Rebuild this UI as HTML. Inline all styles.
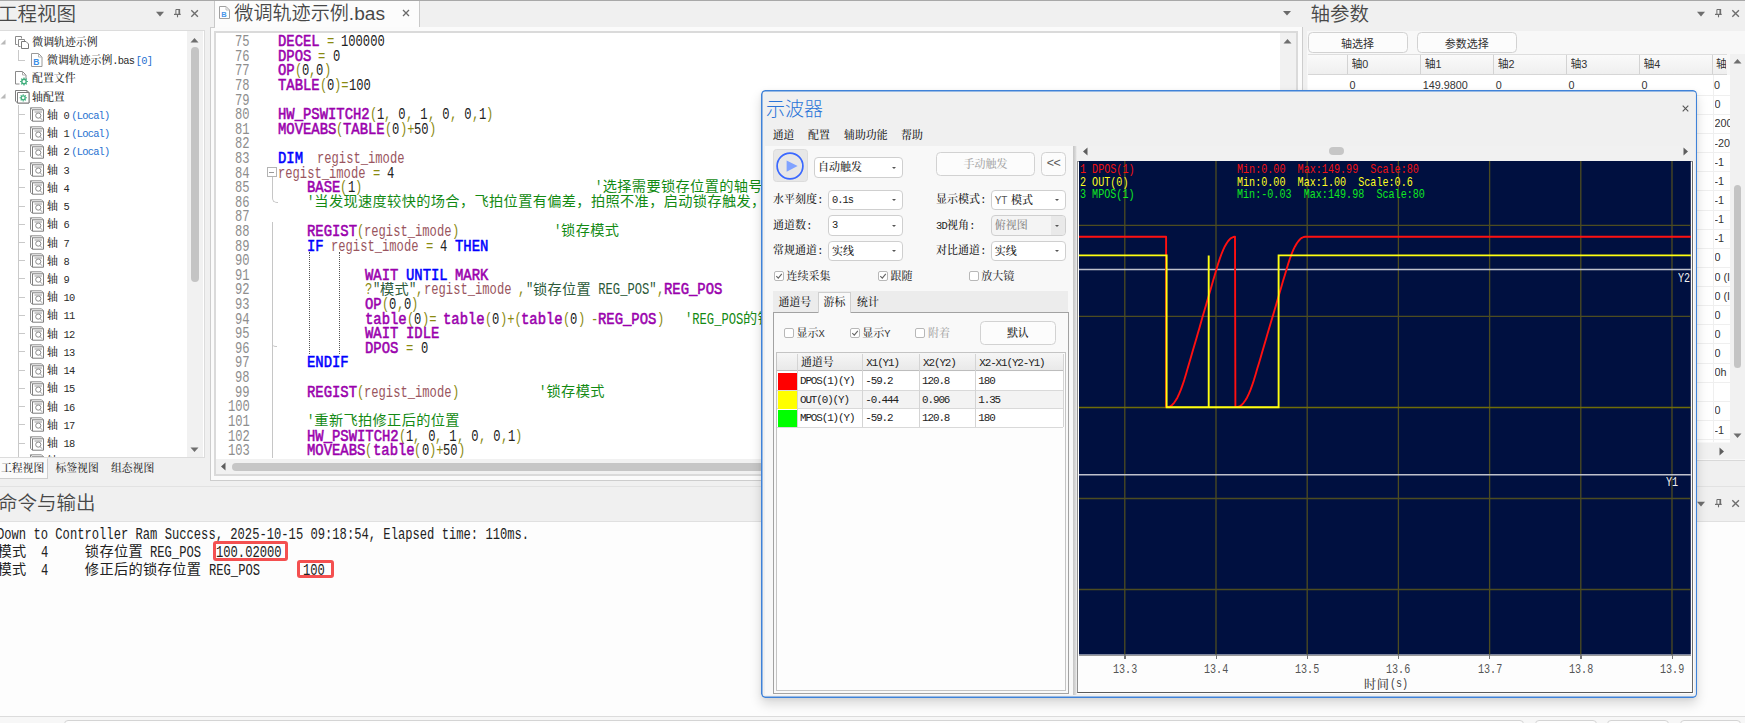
<!DOCTYPE html><html lang="zh"><head><meta charset="utf-8"><title>示波器</title><style>
*{box-sizing:border-box;margin:0;padding:0}
html,body{width:1745px;height:723px;overflow:hidden}
body{position:relative;background:#f0f0f0;font-family:"Liberation Sans","Noto Sans CJK SC",sans-serif;font-size:11px;color:#333}
.a{position:absolute}
.ttl{position:absolute;font-size:19.5px;color:#484848;white-space:nowrap;line-height:24px;font-weight:350}
.song{font-family:"Liberation Mono","Noto Serif CJK SC",serif;font-weight:500}
.ui{font-family:"Liberation Sans","Noto Sans CJK SC",sans-serif}
.tr{position:absolute;left:0;height:18px;line-height:18px;white-space:nowrap;font-size:10.9px;color:#2a2a2a}
.tr b{font-weight:normal;color:#1e6fd0}
.l{font-family:"Liberation Mono",monospace;font-size:10.4px;letter-spacing:-.75px}
.combo .l{position:relative;top:-1.3px;letter-spacing:-1px}
.mono{font-family:"Liberation Mono","Noto Sans CJK SC",monospace}
.ln{position:absolute;left:0;width:249.6px;text-align:right;color:#8e8e8e;height:14.6px;line-height:14.6px;font-size:0}
.ln span{display:inline-block;height:14.6px;line-height:14.6px;text-align:left}
.ln i{display:inline-block;position:relative;top:2px;font-style:normal;transform-origin:0 50%;transform:scaleX(.769);font-family:"Liberation Mono",monospace;font-size:15.8px}
.cl{position:absolute;left:277.9px;height:14.6px;line-height:14.6px;white-space:pre;font-size:0}
.cl span{display:inline-block;height:14.6px;line-height:14.6px;white-space:pre;vertical-align:top;overflow:visible}
.cl i{display:inline-block;position:relative;top:2px;font-style:normal;transform-origin:0 50%;white-space:pre;font-family:"Liberation Mono",monospace;font-size:15.8px}
.cl .r i{transform:scaleX(.769)}
.cl .b i{transform:scaleX(.8787);font-weight:normal;-webkit-text-stroke:.55px currentColor}
.cl .c{font-family:"Noto Sans CJK SC",sans-serif;font-size:14.2px;letter-spacing:.37px;position:relative;top:-.8px}
.kw{color:#9a00ad}.bl{color:#0000ff}.id{color:#9a5560}.op{color:#8a8a10}.nm{color:#222}.cm{color:#138a13}.st{color:#2d5a3a}
.combo{position:absolute;height:20.5px;background:#fff;border:1px solid #cfcfcf;border-radius:4px;font-size:11px;line-height:20.6px;padding-left:2.5px;color:#222;white-space:nowrap;overflow:hidden}
.combo:after{content:"";position:absolute;right:6.5px;top:8.5px;border:2.4px solid transparent;border-top:2.8px solid #555;border-bottom:0}
.lbl{position:absolute;font-size:11px;line-height:14px;color:#222;white-space:nowrap}
.cb{position:absolute;width:10px;height:10px;border:1px solid #b8b8b8;border-radius:2px;background:#fff}
.btn{position:absolute;background:#fcfcfc;border:1px solid #d2d2d2;border-radius:4.5px;text-align:center;white-space:nowrap}
.pt{font-family:"Liberation Mono","Noto Sans CJK SC",monospace;font-size:13.2px;white-space:pre;transform:scaleX(.766);transform-origin:0 50%}
</style></head><body>
<div class="a" style="left:0;top:0;width:1745px;height:1px;background:#a8a8a8"></div>
<div class="ttl" style="left:-2px;top:2px">工程视图</div>
<svg class="a" style="left:149.8px;top:5px" width="56" height="16" viewBox="0 0 56 16"><path d="M6 6.8h8l-4 4.7z" fill="#6e6e6e"/><path d="M25.9 9.2V4.5h3.4" fill="none" stroke="#6e6e6e" stroke-width="1"/><path d="M29.3 4v5.3" stroke="#6e6e6e" stroke-width="1.7"/><path d="M24 9.4h6.7" stroke="#6e6e6e" stroke-width="1.2"/><path d="M27.5 9.6v2.7" stroke="#6e6e6e" stroke-width="1.1"/><path d="M41.3 5.2l6.6 6.6M47.9 5.2l-6.6 6.6" stroke="#6e6e6e" stroke-width="1.35" fill="none"/></svg>
<div class="a" style="left:0;top:30px;width:204.5px;height:428px;background:#fff;border:1px solid #dcdcdc;border-left:0"></div>
<div class="a" style="left:187px;top:31px;width:16px;height:426px;background:#f1f1f1"></div>
<div class="a" style="left:190.5px;top:47px;width:8.4px;height:235px;background:#c4c4c4;border-radius:4px"></div>
<svg class="a" style="left:190px;top:37px" width="9" height="6" viewBox="0 0 9 6"><path d="M0.5 5.5h8L4.5 1z" fill="#6e6e6e"/></svg>
<svg class="a" style="left:190px;top:447px" width="9" height="6" viewBox="0 0 9 6"><path d="M0.5 0.5h8L4.5 5z" fill="#6e6e6e"/></svg>
<div class="a" style="left:0;top:31px;width:187px;height:426px;overflow:hidden">
<div class="tr song" style="top:1.50px;width:187px"><svg class="a" style="left:14px;top:2px" width="16" height="15" viewBox="0 0 16 15"><path d="M1.5 1.5h6v2M1.5 1.5v8h2" fill="none" stroke="#8a8a8a" stroke-width="1"/><path d="M4.5 4.5h6v2h-1M4.5 4.5v7h2" fill="#fff" stroke="#8a8a8a" stroke-width="1"/><path d="M7.5 6.5h4.5l2.5 2.5v4.5h-7z" fill="#fff" stroke="#7a7a7a" stroke-width="1"/></svg><span class="a" style="left:32.3px;top:1.5px">微调轨迹示例</span></div>
<div class="tr song" style="top:19.73px;width:187px"><svg class="a" style="left:30px;top:1px" width="14" height="16" viewBox="0 0 14 16"><path d="M1.5 1.5h7l3.5 3.5v9.5h-10.5z" fill="#fff" stroke="#9a9a9a"/><path d="M8.5 1.5v3.5h3.5" fill="none" stroke="#b5b5b5"/><text x="3.2" y="13" font-family="Liberation Sans,sans-serif" font-size="8.5" font-weight="bold" fill="#3a8ee6">B</text></svg><span class="a" style="left:47px;top:1.5px">微调轨迹示例<span class="l">.bas</span><b class="l" style="margin-left:1.5px">[0]</b></span></div>
<div class="tr song" style="top:37.96px;width:187px"><svg class="a" style="left:14px;top:1px" width="16" height="16" viewBox="0 0 16 16"><path d="M1.5 1.5h7l3.5 3.5v4M1.5 1.5v12.5h4" fill="none" stroke="#8a8a8a"/><path d="M8.5 1.5v3.5h3.5" fill="none" stroke="#aaa"/><circle cx="10" cy="11.5" r="2.2" fill="none" stroke="#3fae7c" stroke-width="1.4"/><path d="M10 7.6v1.4M10 14v1.4M6.1 11.5h1.4M12.5 11.5h1.4M7.2 8.7l1 1M11.8 13.3l1 1M12.8 8.7l-1 1M8.2 13.3l-1 1" stroke="#3fae7c" stroke-width="1.2"/></svg><span class="a" style="left:32px;top:1.5px">配置文件</span></div>
<div class="tr song" style="top:56.19px;width:187px"><svg class="a" style="left:14px;top:2px" width="16" height="15" viewBox="0 0 16 15"><path d="M1.5 1.5h11.5v11M1.5 1.5v10.5l2 2h11.5v-10.5l-2-2" fill="#fff" stroke="#7d7d7d"/><path d="M3.5 3.5h11.5v10.5h-11.5z" fill="#fff" stroke="#7d7d7d"/><circle cx="9.2" cy="8.8" r="2" fill="none" stroke="#3fae7c" stroke-width="1.3"/><path d="M9.2 5.2v1.3M9.2 11.2v1.3M5.6 8.8h1.3M11.6 8.8h1.3M6.7 6.3l.9.9M10.9 10.5l.9.9M11.8 6.3l-.9.9M7.6 10.5l-.9.9" stroke="#3fae7c" stroke-width="1.1"/></svg><span class="a" style="left:32px;top:1.5px">轴配置</span></div>
<div class="tr song" style="top:74.42px;width:187px"><svg class="a" style="left:29px;top:2px" width="16" height="15" viewBox="0 0 16 15"><path d="M1.5 0.8h11l2 2" fill="none" stroke="#8d8d8d"/><path d="M1.5 0.8v11.5l2 2" fill="none" stroke="#8d8d8d"/><path d="M3.5 2.8h11v11.4h-11z" fill="#fff" stroke="#7d7d7d"/><path d="M1.5 0.8l2 2" stroke="#8d8d8d"/><circle cx="9.3" cy="8.6" r="2.6" fill="none" stroke="#8a8a8a" stroke-width="1"/><path d="M5.5 5h7.5M11 10.5l2 2.2" stroke="#9a9a9a" stroke-width="1"/></svg><span class="a" style="left:47px;top:1.5px">轴<span class="l"> 0</span><b class="l" style="margin-left:2.3px">(Local)</b></span></div>
<div class="tr song" style="top:92.65px;width:187px"><svg class="a" style="left:29px;top:2px" width="16" height="15" viewBox="0 0 16 15"><path d="M1.5 0.8h11l2 2" fill="none" stroke="#8d8d8d"/><path d="M1.5 0.8v11.5l2 2" fill="none" stroke="#8d8d8d"/><path d="M3.5 2.8h11v11.4h-11z" fill="#fff" stroke="#7d7d7d"/><path d="M1.5 0.8l2 2" stroke="#8d8d8d"/><circle cx="9.3" cy="8.6" r="2.6" fill="none" stroke="#8a8a8a" stroke-width="1"/><path d="M5.5 5h7.5M11 10.5l2 2.2" stroke="#9a9a9a" stroke-width="1"/></svg><span class="a" style="left:47px;top:1.5px">轴<span class="l"> 1</span><b class="l" style="margin-left:2.3px">(Local)</b></span></div>
<div class="tr song" style="top:110.88px;width:187px"><svg class="a" style="left:29px;top:2px" width="16" height="15" viewBox="0 0 16 15"><path d="M1.5 0.8h11l2 2" fill="none" stroke="#8d8d8d"/><path d="M1.5 0.8v11.5l2 2" fill="none" stroke="#8d8d8d"/><path d="M3.5 2.8h11v11.4h-11z" fill="#fff" stroke="#7d7d7d"/><path d="M1.5 0.8l2 2" stroke="#8d8d8d"/><circle cx="9.3" cy="8.6" r="2.6" fill="none" stroke="#8a8a8a" stroke-width="1"/><path d="M5.5 5h7.5M11 10.5l2 2.2" stroke="#9a9a9a" stroke-width="1"/></svg><span class="a" style="left:47px;top:1.5px">轴<span class="l"> 2</span><b class="l" style="margin-left:2.3px">(Local)</b></span></div>
<div class="tr song" style="top:129.11px;width:187px"><svg class="a" style="left:29px;top:2px" width="16" height="15" viewBox="0 0 16 15"><path d="M1.5 0.8h11l2 2" fill="none" stroke="#8d8d8d"/><path d="M1.5 0.8v11.5l2 2" fill="none" stroke="#8d8d8d"/><path d="M3.5 2.8h11v11.4h-11z" fill="#fff" stroke="#7d7d7d"/><path d="M1.5 0.8l2 2" stroke="#8d8d8d"/><circle cx="9.3" cy="8.6" r="2.6" fill="none" stroke="#8a8a8a" stroke-width="1"/><path d="M5.5 5h7.5M11 10.5l2 2.2" stroke="#9a9a9a" stroke-width="1"/></svg><span class="a" style="left:47px;top:1.5px">轴<span class="l"> 3</span></span></div>
<div class="tr song" style="top:147.34px;width:187px"><svg class="a" style="left:29px;top:2px" width="16" height="15" viewBox="0 0 16 15"><path d="M1.5 0.8h11l2 2" fill="none" stroke="#8d8d8d"/><path d="M1.5 0.8v11.5l2 2" fill="none" stroke="#8d8d8d"/><path d="M3.5 2.8h11v11.4h-11z" fill="#fff" stroke="#7d7d7d"/><path d="M1.5 0.8l2 2" stroke="#8d8d8d"/><circle cx="9.3" cy="8.6" r="2.6" fill="none" stroke="#8a8a8a" stroke-width="1"/><path d="M5.5 5h7.5M11 10.5l2 2.2" stroke="#9a9a9a" stroke-width="1"/></svg><span class="a" style="left:47px;top:1.5px">轴<span class="l"> 4</span></span></div>
<div class="tr song" style="top:165.57px;width:187px"><svg class="a" style="left:29px;top:2px" width="16" height="15" viewBox="0 0 16 15"><path d="M1.5 0.8h11l2 2" fill="none" stroke="#8d8d8d"/><path d="M1.5 0.8v11.5l2 2" fill="none" stroke="#8d8d8d"/><path d="M3.5 2.8h11v11.4h-11z" fill="#fff" stroke="#7d7d7d"/><path d="M1.5 0.8l2 2" stroke="#8d8d8d"/><circle cx="9.3" cy="8.6" r="2.6" fill="none" stroke="#8a8a8a" stroke-width="1"/><path d="M5.5 5h7.5M11 10.5l2 2.2" stroke="#9a9a9a" stroke-width="1"/></svg><span class="a" style="left:47px;top:1.5px">轴<span class="l"> 5</span></span></div>
<div class="tr song" style="top:183.80px;width:187px"><svg class="a" style="left:29px;top:2px" width="16" height="15" viewBox="0 0 16 15"><path d="M1.5 0.8h11l2 2" fill="none" stroke="#8d8d8d"/><path d="M1.5 0.8v11.5l2 2" fill="none" stroke="#8d8d8d"/><path d="M3.5 2.8h11v11.4h-11z" fill="#fff" stroke="#7d7d7d"/><path d="M1.5 0.8l2 2" stroke="#8d8d8d"/><circle cx="9.3" cy="8.6" r="2.6" fill="none" stroke="#8a8a8a" stroke-width="1"/><path d="M5.5 5h7.5M11 10.5l2 2.2" stroke="#9a9a9a" stroke-width="1"/></svg><span class="a" style="left:47px;top:1.5px">轴<span class="l"> 6</span></span></div>
<div class="tr song" style="top:202.03px;width:187px"><svg class="a" style="left:29px;top:2px" width="16" height="15" viewBox="0 0 16 15"><path d="M1.5 0.8h11l2 2" fill="none" stroke="#8d8d8d"/><path d="M1.5 0.8v11.5l2 2" fill="none" stroke="#8d8d8d"/><path d="M3.5 2.8h11v11.4h-11z" fill="#fff" stroke="#7d7d7d"/><path d="M1.5 0.8l2 2" stroke="#8d8d8d"/><circle cx="9.3" cy="8.6" r="2.6" fill="none" stroke="#8a8a8a" stroke-width="1"/><path d="M5.5 5h7.5M11 10.5l2 2.2" stroke="#9a9a9a" stroke-width="1"/></svg><span class="a" style="left:47px;top:1.5px">轴<span class="l"> 7</span></span></div>
<div class="tr song" style="top:220.26px;width:187px"><svg class="a" style="left:29px;top:2px" width="16" height="15" viewBox="0 0 16 15"><path d="M1.5 0.8h11l2 2" fill="none" stroke="#8d8d8d"/><path d="M1.5 0.8v11.5l2 2" fill="none" stroke="#8d8d8d"/><path d="M3.5 2.8h11v11.4h-11z" fill="#fff" stroke="#7d7d7d"/><path d="M1.5 0.8l2 2" stroke="#8d8d8d"/><circle cx="9.3" cy="8.6" r="2.6" fill="none" stroke="#8a8a8a" stroke-width="1"/><path d="M5.5 5h7.5M11 10.5l2 2.2" stroke="#9a9a9a" stroke-width="1"/></svg><span class="a" style="left:47px;top:1.5px">轴<span class="l"> 8</span></span></div>
<div class="tr song" style="top:238.49px;width:187px"><svg class="a" style="left:29px;top:2px" width="16" height="15" viewBox="0 0 16 15"><path d="M1.5 0.8h11l2 2" fill="none" stroke="#8d8d8d"/><path d="M1.5 0.8v11.5l2 2" fill="none" stroke="#8d8d8d"/><path d="M3.5 2.8h11v11.4h-11z" fill="#fff" stroke="#7d7d7d"/><path d="M1.5 0.8l2 2" stroke="#8d8d8d"/><circle cx="9.3" cy="8.6" r="2.6" fill="none" stroke="#8a8a8a" stroke-width="1"/><path d="M5.5 5h7.5M11 10.5l2 2.2" stroke="#9a9a9a" stroke-width="1"/></svg><span class="a" style="left:47px;top:1.5px">轴<span class="l"> 9</span></span></div>
<div class="tr song" style="top:256.72px;width:187px"><svg class="a" style="left:29px;top:2px" width="16" height="15" viewBox="0 0 16 15"><path d="M1.5 0.8h11l2 2" fill="none" stroke="#8d8d8d"/><path d="M1.5 0.8v11.5l2 2" fill="none" stroke="#8d8d8d"/><path d="M3.5 2.8h11v11.4h-11z" fill="#fff" stroke="#7d7d7d"/><path d="M1.5 0.8l2 2" stroke="#8d8d8d"/><circle cx="9.3" cy="8.6" r="2.6" fill="none" stroke="#8a8a8a" stroke-width="1"/><path d="M5.5 5h7.5M11 10.5l2 2.2" stroke="#9a9a9a" stroke-width="1"/></svg><span class="a" style="left:47px;top:1.5px">轴<span class="l"> 10</span></span></div>
<div class="tr song" style="top:274.95px;width:187px"><svg class="a" style="left:29px;top:2px" width="16" height="15" viewBox="0 0 16 15"><path d="M1.5 0.8h11l2 2" fill="none" stroke="#8d8d8d"/><path d="M1.5 0.8v11.5l2 2" fill="none" stroke="#8d8d8d"/><path d="M3.5 2.8h11v11.4h-11z" fill="#fff" stroke="#7d7d7d"/><path d="M1.5 0.8l2 2" stroke="#8d8d8d"/><circle cx="9.3" cy="8.6" r="2.6" fill="none" stroke="#8a8a8a" stroke-width="1"/><path d="M5.5 5h7.5M11 10.5l2 2.2" stroke="#9a9a9a" stroke-width="1"/></svg><span class="a" style="left:47px;top:1.5px">轴<span class="l"> 11</span></span></div>
<div class="tr song" style="top:293.18px;width:187px"><svg class="a" style="left:29px;top:2px" width="16" height="15" viewBox="0 0 16 15"><path d="M1.5 0.8h11l2 2" fill="none" stroke="#8d8d8d"/><path d="M1.5 0.8v11.5l2 2" fill="none" stroke="#8d8d8d"/><path d="M3.5 2.8h11v11.4h-11z" fill="#fff" stroke="#7d7d7d"/><path d="M1.5 0.8l2 2" stroke="#8d8d8d"/><circle cx="9.3" cy="8.6" r="2.6" fill="none" stroke="#8a8a8a" stroke-width="1"/><path d="M5.5 5h7.5M11 10.5l2 2.2" stroke="#9a9a9a" stroke-width="1"/></svg><span class="a" style="left:47px;top:1.5px">轴<span class="l"> 12</span></span></div>
<div class="tr song" style="top:311.41px;width:187px"><svg class="a" style="left:29px;top:2px" width="16" height="15" viewBox="0 0 16 15"><path d="M1.5 0.8h11l2 2" fill="none" stroke="#8d8d8d"/><path d="M1.5 0.8v11.5l2 2" fill="none" stroke="#8d8d8d"/><path d="M3.5 2.8h11v11.4h-11z" fill="#fff" stroke="#7d7d7d"/><path d="M1.5 0.8l2 2" stroke="#8d8d8d"/><circle cx="9.3" cy="8.6" r="2.6" fill="none" stroke="#8a8a8a" stroke-width="1"/><path d="M5.5 5h7.5M11 10.5l2 2.2" stroke="#9a9a9a" stroke-width="1"/></svg><span class="a" style="left:47px;top:1.5px">轴<span class="l"> 13</span></span></div>
<div class="tr song" style="top:329.64px;width:187px"><svg class="a" style="left:29px;top:2px" width="16" height="15" viewBox="0 0 16 15"><path d="M1.5 0.8h11l2 2" fill="none" stroke="#8d8d8d"/><path d="M1.5 0.8v11.5l2 2" fill="none" stroke="#8d8d8d"/><path d="M3.5 2.8h11v11.4h-11z" fill="#fff" stroke="#7d7d7d"/><path d="M1.5 0.8l2 2" stroke="#8d8d8d"/><circle cx="9.3" cy="8.6" r="2.6" fill="none" stroke="#8a8a8a" stroke-width="1"/><path d="M5.5 5h7.5M11 10.5l2 2.2" stroke="#9a9a9a" stroke-width="1"/></svg><span class="a" style="left:47px;top:1.5px">轴<span class="l"> 14</span></span></div>
<div class="tr song" style="top:347.87px;width:187px"><svg class="a" style="left:29px;top:2px" width="16" height="15" viewBox="0 0 16 15"><path d="M1.5 0.8h11l2 2" fill="none" stroke="#8d8d8d"/><path d="M1.5 0.8v11.5l2 2" fill="none" stroke="#8d8d8d"/><path d="M3.5 2.8h11v11.4h-11z" fill="#fff" stroke="#7d7d7d"/><path d="M1.5 0.8l2 2" stroke="#8d8d8d"/><circle cx="9.3" cy="8.6" r="2.6" fill="none" stroke="#8a8a8a" stroke-width="1"/><path d="M5.5 5h7.5M11 10.5l2 2.2" stroke="#9a9a9a" stroke-width="1"/></svg><span class="a" style="left:47px;top:1.5px">轴<span class="l"> 15</span></span></div>
<div class="tr song" style="top:366.10px;width:187px"><svg class="a" style="left:29px;top:2px" width="16" height="15" viewBox="0 0 16 15"><path d="M1.5 0.8h11l2 2" fill="none" stroke="#8d8d8d"/><path d="M1.5 0.8v11.5l2 2" fill="none" stroke="#8d8d8d"/><path d="M3.5 2.8h11v11.4h-11z" fill="#fff" stroke="#7d7d7d"/><path d="M1.5 0.8l2 2" stroke="#8d8d8d"/><circle cx="9.3" cy="8.6" r="2.6" fill="none" stroke="#8a8a8a" stroke-width="1"/><path d="M5.5 5h7.5M11 10.5l2 2.2" stroke="#9a9a9a" stroke-width="1"/></svg><span class="a" style="left:47px;top:1.5px">轴<span class="l"> 16</span></span></div>
<div class="tr song" style="top:384.33px;width:187px"><svg class="a" style="left:29px;top:2px" width="16" height="15" viewBox="0 0 16 15"><path d="M1.5 0.8h11l2 2" fill="none" stroke="#8d8d8d"/><path d="M1.5 0.8v11.5l2 2" fill="none" stroke="#8d8d8d"/><path d="M3.5 2.8h11v11.4h-11z" fill="#fff" stroke="#7d7d7d"/><path d="M1.5 0.8l2 2" stroke="#8d8d8d"/><circle cx="9.3" cy="8.6" r="2.6" fill="none" stroke="#8a8a8a" stroke-width="1"/><path d="M5.5 5h7.5M11 10.5l2 2.2" stroke="#9a9a9a" stroke-width="1"/></svg><span class="a" style="left:47px;top:1.5px">轴<span class="l"> 17</span></span></div>
<div class="tr song" style="top:402.56px;width:187px"><svg class="a" style="left:29px;top:2px" width="16" height="15" viewBox="0 0 16 15"><path d="M1.5 0.8h11l2 2" fill="none" stroke="#8d8d8d"/><path d="M1.5 0.8v11.5l2 2" fill="none" stroke="#8d8d8d"/><path d="M3.5 2.8h11v11.4h-11z" fill="#fff" stroke="#7d7d7d"/><path d="M1.5 0.8l2 2" stroke="#8d8d8d"/><circle cx="9.3" cy="8.6" r="2.6" fill="none" stroke="#8a8a8a" stroke-width="1"/><path d="M5.5 5h7.5M11 10.5l2 2.2" stroke="#9a9a9a" stroke-width="1"/></svg><span class="a" style="left:47px;top:1.5px">轴<span class="l"> 18</span></span></div>
<div class="tr song" style="top:420.79px;width:187px"><svg class="a" style="left:29px;top:2px" width="16" height="15" viewBox="0 0 16 15"><path d="M1.5 0.8h11l2 2" fill="none" stroke="#8d8d8d"/><path d="M1.5 0.8v11.5l2 2" fill="none" stroke="#8d8d8d"/><path d="M3.5 2.8h11v11.4h-11z" fill="#fff" stroke="#7d7d7d"/><path d="M1.5 0.8l2 2" stroke="#8d8d8d"/><circle cx="9.3" cy="8.6" r="2.6" fill="none" stroke="#8a8a8a" stroke-width="1"/><path d="M5.5 5h7.5M11 10.5l2 2.2" stroke="#9a9a9a" stroke-width="1"/></svg><span class="a" style="left:47px;top:1.5px">轴<span class="l"> 19</span></span></div>
<svg class="a" style="left:0;top:7.50px" width="6" height="6" viewBox="0 0 6 6"><path d="M5.5 0.5v5h-5z" fill="#b9b9b9"/></svg>
<svg class="a" style="left:0;top:62.19px" width="6" height="6" viewBox="0 0 6 6"><path d="M5.5 0.5v5h-5z" fill="#b9b9b9"/></svg>
<div class="a" style="left:18px;top:18.73px;width:1px;height:10.00px;background:#c9c9c9"></div>
<div class="a" style="left:18px;top:28.73px;width:7px;height:1px;background:#c9c9c9"></div>
<div class="a" style="left:18px;top:74.19px;width:1px;height:374.81px;background:#c9c9c9"></div>
<div class="a" style="left:18px;top:83.42px;width:7px;height:1px;background:#c9c9c9"></div>
<div class="a" style="left:18px;top:101.65px;width:7px;height:1px;background:#c9c9c9"></div>
<div class="a" style="left:18px;top:119.88px;width:7px;height:1px;background:#c9c9c9"></div>
<div class="a" style="left:18px;top:138.11px;width:7px;height:1px;background:#c9c9c9"></div>
<div class="a" style="left:18px;top:156.34px;width:7px;height:1px;background:#c9c9c9"></div>
<div class="a" style="left:18px;top:174.57px;width:7px;height:1px;background:#c9c9c9"></div>
<div class="a" style="left:18px;top:192.80px;width:7px;height:1px;background:#c9c9c9"></div>
<div class="a" style="left:18px;top:211.03px;width:7px;height:1px;background:#c9c9c9"></div>
<div class="a" style="left:18px;top:229.26px;width:7px;height:1px;background:#c9c9c9"></div>
<div class="a" style="left:18px;top:247.49px;width:7px;height:1px;background:#c9c9c9"></div>
<div class="a" style="left:18px;top:265.72px;width:7px;height:1px;background:#c9c9c9"></div>
<div class="a" style="left:18px;top:283.95px;width:7px;height:1px;background:#c9c9c9"></div>
<div class="a" style="left:18px;top:302.18px;width:7px;height:1px;background:#c9c9c9"></div>
<div class="a" style="left:18px;top:320.41px;width:7px;height:1px;background:#c9c9c9"></div>
<div class="a" style="left:18px;top:338.64px;width:7px;height:1px;background:#c9c9c9"></div>
<div class="a" style="left:18px;top:356.87px;width:7px;height:1px;background:#c9c9c9"></div>
<div class="a" style="left:18px;top:375.10px;width:7px;height:1px;background:#c9c9c9"></div>
<div class="a" style="left:18px;top:393.33px;width:7px;height:1px;background:#c9c9c9"></div>
<div class="a" style="left:18px;top:411.56px;width:7px;height:1px;background:#c9c9c9"></div>
<div class="a" style="left:18px;top:429.79px;width:7px;height:1px;background:#c9c9c9"></div>
</div>
<div class="a" style="left:0;top:458px;width:48px;height:20.5px;background:#fbfbfb;border:1px solid #cfcfcf;border-left:0;border-top-color:#fbfbfb"></div>
<div class="lbl song" style="left:1px;top:462.3px;font-size:10.8px;color:#333">工程视图</div>
<div class="lbl song" style="left:55.5px;top:462.3px;font-size:10.8px;color:#333">标签视图</div>
<div class="lbl song" style="left:111px;top:462.3px;font-size:10.8px;color:#333">组态视图</div>
<div class="a" style="left:214.4px;top:1px;width:205.6px;height:27px;background:#fcfcfc;border-left:1px solid #c9c9c9;border-right:1px solid #c9c9c9"></div>
<div class="a" style="left:419px;top:27px;width:884px;height:1px;background:#c9c9c9"></div>
<svg class="a" style="left:218px;top:5px" width="13" height="15" viewBox="0 0 13 15"><path d="M1.5 1.5h6.5l3.5 3.5v8.5h-10z" fill="#fff" stroke="#a0a0a0"/><path d="M8 1.5v3.5h3.5" fill="none" stroke="#c0c0c0"/><text x="3.2" y="12" font-family="Liberation Sans,sans-serif" font-size="7.5" font-weight="bold" fill="#4a97ea">B</text></svg>
<div class="ttl" style="left:234.3px;top:1.5px;font-size:19.1px">微调轨迹示例.bas</div>
<svg class="a" style="left:401.6px;top:9px" width="8" height="8" viewBox="0 0 8 8"><path d="M1 1l6 6M7 1l-6 6" stroke="#6a6a6a" stroke-width="1.3" fill="none"/></svg>
<svg class="a" style="left:1282px;top:9px" width="10" height="8" viewBox="0 0 10 8"><path d="M1 2h8L5 6.5z" fill="#6a6a6a"/></svg>
<div class="a" style="left:209.5px;top:27px;width:1093px;height:454px;background:#fbfbfb;border:1px solid #cdcdcd;border-top:0"></div>
<div class="a" style="left:209.5px;top:27px;width:5px;height:1px;background:#cdcdcd"></div>
<div class="a" style="left:213.5px;top:31px;width:1084px;height:445px;background:#fff;border:2px solid #dadada"></div>
<div class="a" style="left:1280px;top:33px;width:16px;height:441px;background:#f1f1f1"></div>
<svg class="a" style="left:1283px;top:38px" width="9" height="6" viewBox="0 0 9 6"><path d="M0.5 5.5h8L4.5 1z" fill="#6e6e6e"/></svg>
<div class="a" style="left:215.5px;top:458.5px;width:1065px;height:15.5px;background:#f1f1f1"></div>
<svg class="a" style="left:220px;top:462px" width="6" height="9" viewBox="0 0 6 9"><path d="M5.5 0.5v8L1 4.5z" fill="#5e5e5e"/></svg>
<div class="a" style="left:231.5px;top:462.5px;width:700px;height:8px;background:#c6c6c6;border-radius:4px"></div>
<div class="a" style="left:0;top:0;width:1280px;height:458px;overflow:hidden">
<div class="ln" style="top:33.20px"><span style="width:14.58px"><i>75</i></span></div>
<div class="cl" style="top:33.20px"><span class="b kw" style="width:41.65px"><i>DECEL</i></span><span class="r" style="width:7.29px"> </span><span class="r op" style="width:7.29px"><i>=</i></span><span class="r" style="width:7.29px"> </span><span class="r nm" style="width:43.74px"><i>100000</i></span></div>
<div class="ln" style="top:47.80px"><span style="width:14.58px"><i>76</i></span></div>
<div class="cl" style="top:47.80px"><span class="b kw" style="width:33.32px"><i>DPOS</i></span><span class="r" style="width:7.29px"> </span><span class="r op" style="width:7.29px"><i>=</i></span><span class="r" style="width:7.29px"> </span><span class="r nm" style="width:7.29px"><i>0</i></span></div>
<div class="ln" style="top:62.41px"><span style="width:14.58px"><i>77</i></span></div>
<div class="cl" style="top:62.41px"><span class="b kw" style="width:16.66px"><i>OP</i></span><span class="r op" style="width:7.29px"><i>(</i></span><span class="r nm" style="width:7.29px"><i>0</i></span><span class="r op" style="width:7.29px"><i>,</i></span><span class="r nm" style="width:7.29px"><i>0</i></span><span class="r op" style="width:7.29px"><i>)</i></span></div>
<div class="ln" style="top:77.01px"><span style="width:14.58px"><i>78</i></span></div>
<div class="cl" style="top:77.01px"><span class="b kw" style="width:41.65px"><i>TABLE</i></span><span class="r op" style="width:7.29px"><i>(</i></span><span class="r nm" style="width:7.29px"><i>0</i></span><span class="r op" style="width:14.58px"><i>)=</i></span><span class="r nm" style="width:21.87px"><i>100</i></span></div>
<div class="ln" style="top:91.61px"><span style="width:14.58px"><i>79</i></span></div>
<div class="ln" style="top:106.22px"><span style="width:14.58px"><i>80</i></span></div>
<div class="cl" style="top:106.22px"><span class="b kw" style="width:91.63px"><i>HW_PSWITCH2</i></span><span class="r op" style="width:7.29px"><i>(</i></span><span class="r nm" style="width:7.29px"><i>1</i></span><span class="r op" style="width:7.29px"><i>,</i></span><span class="r nm" style="width:14.58px"><i> 0</i></span><span class="r op" style="width:7.29px"><i>,</i></span><span class="r nm" style="width:14.58px"><i> 1</i></span><span class="r op" style="width:7.29px"><i>,</i></span><span class="r nm" style="width:14.58px"><i> 0</i></span><span class="r op" style="width:7.29px"><i>,</i></span><span class="r nm" style="width:14.58px"><i> 0</i></span><span class="r op" style="width:7.29px"><i>,</i></span><span class="r nm" style="width:7.29px"><i>1</i></span><span class="r op" style="width:7.29px"><i>)</i></span></div>
<div class="ln" style="top:120.82px"><span style="width:14.58px"><i>81</i></span></div>
<div class="cl" style="top:120.82px"><span class="b kw" style="width:58.31px"><i>MOVEABS</i></span><span class="r op" style="width:7.29px"><i>(</i></span><span class="b kw" style="width:41.65px"><i>TABLE</i></span><span class="r op" style="width:7.29px"><i>(</i></span><span class="r nm" style="width:7.29px"><i>0</i></span><span class="r op" style="width:14.58px"><i>)+</i></span><span class="r nm" style="width:14.58px"><i>50</i></span><span class="r op" style="width:7.29px"><i>)</i></span></div>
<div class="ln" style="top:135.43px"><span style="width:14.58px"><i>82</i></span></div>
<div class="ln" style="top:150.03px"><span style="width:14.58px"><i>83</i></span></div>
<div class="cl" style="top:150.03px"><span class="b bl" style="width:24.99px"><i>DIM</i></span><span class="r" style="width:14.58px"> </span><span class="r id" style="width:87.48px"><i>regist_imode</i></span></div>
<div class="ln" style="top:164.63px"><span style="width:14.58px"><i>84</i></span></div>
<div class="cl" style="top:164.63px"><span class="r id" style="width:87.48px"><i>regist_imode</i></span><span class="r" style="width:7.29px"> </span><span class="r op" style="width:7.29px"><i>=</i></span><span class="r" style="width:7.29px"> </span><span class="r nm" style="width:7.29px"><i>4</i></span></div>
<div class="ln" style="top:179.24px"><span style="width:14.58px"><i>85</i></span></div>
<div class="cl" style="top:179.24px"><span class="r" style="width:29.16px"> </span><span class="b kw" style="width:33.32px"><i>BASE</i></span><span class="r op" style="width:7.29px"><i>(</i></span><span class="r nm" style="width:7.29px"><i>1</i></span><span class="r op" style="width:7.29px"><i>)</i></span><span class="r" style="width:233.28px"> </span><span class="r cm" style="width:7.29px"><i>'</i></span><span class="c cm" style="width:160.27px">选择需要锁存位置的轴号</span></div>
<div class="ln" style="top:193.84px"><span style="width:14.58px"><i>86</i></span></div>
<div class="cl" style="top:193.84px"><span class="r" style="width:29.16px"> </span><span class="r cm" style="width:7.29px"><i>'</i></span><span class="c cm" style="width:451.67px">当发现速度较快的场合，飞拍位置有偏差，拍照不准，启动锁存触发，</span></div>
<div class="ln" style="top:208.45px"><span style="width:14.58px"><i>87</i></span></div>
<div class="ln" style="top:223.05px"><span style="width:14.58px"><i>88</i></span></div>
<div class="cl" style="top:223.05px"><span class="r" style="width:29.16px"> </span><span class="b kw" style="width:49.98px"><i>REGIST</i></span><span class="r op" style="width:7.29px"><i>(</i></span><span class="r id" style="width:87.48px"><i>regist_imode</i></span><span class="r op" style="width:7.29px"><i>)</i></span><span class="r" style="width:94.77px"> </span><span class="r cm" style="width:7.29px"><i>'</i></span><span class="c cm" style="width:58.28px">锁存模式</span></div>
<div class="ln" style="top:237.65px"><span style="width:14.58px"><i>89</i></span></div>
<div class="cl" style="top:237.65px"><span class="r" style="width:29.16px"> </span><span class="b bl" style="width:16.66px"><i>IF</i></span><span class="r" style="width:7.29px"> </span><span class="r id" style="width:87.48px"><i>regist_imode</i></span><span class="r" style="width:7.29px"> </span><span class="r op" style="width:7.29px"><i>=</i></span><span class="r" style="width:7.29px"> </span><span class="r nm" style="width:7.29px"><i>4</i></span><span class="r" style="width:7.29px"> </span><span class="b bl" style="width:33.32px"><i>THEN</i></span></div>
<div class="ln" style="top:252.26px"><span style="width:14.58px"><i>90</i></span></div>
<div class="ln" style="top:266.86px"><span style="width:14.58px"><i>91</i></span></div>
<div class="cl" style="top:266.86px"><span class="r" style="width:87.48px"> </span><span class="b kw" style="width:33.32px"><i>WAIT</i></span><span class="r" style="width:7.29px"> </span><span class="b bl" style="width:41.65px"><i>UNTIL</i></span><span class="r" style="width:7.29px"> </span><span class="b kw" style="width:33.32px"><i>MARK</i></span></div>
<div class="ln" style="top:281.47px"><span style="width:14.58px"><i>92</i></span></div>
<div class="cl" style="top:281.47px"><span class="r" style="width:87.48px"> </span><span class="r op" style="width:7.29px"><i>?</i></span><span class="r st" style="width:7.29px"><i>"</i></span><span class="c st" style="width:29.14px">模式</span><span class="r st" style="width:7.29px"><i>"</i></span><span class="r op" style="width:7.29px"><i>,</i></span><span class="r id" style="width:87.48px"><i>regist_imode</i></span><span class="r" style="width:7.29px"> </span><span class="r op" style="width:7.29px"><i>,</i></span><span class="r st" style="width:7.29px"><i>"</i></span><span class="c st" style="width:58.28px">锁存位置</span><span class="r st" style="width:65.61px"><i> REG_POS"</i></span><span class="r op" style="width:7.29px"><i>,</i></span><span class="b kw" style="width:58.31px"><i>REG_POS</i></span></div>
<div class="ln" style="top:296.07px"><span style="width:14.58px"><i>93</i></span></div>
<div class="cl" style="top:296.07px"><span class="r" style="width:87.48px"> </span><span class="b kw" style="width:16.66px"><i>OP</i></span><span class="r op" style="width:7.29px"><i>(</i></span><span class="r nm" style="width:7.29px"><i>0</i></span><span class="r op" style="width:7.29px"><i>,</i></span><span class="r nm" style="width:7.29px"><i>0</i></span><span class="r op" style="width:7.29px"><i>)</i></span></div>
<div class="ln" style="top:310.67px"><span style="width:14.58px"><i>94</i></span></div>
<div class="cl" style="top:310.67px"><span class="r" style="width:87.48px"> </span><span class="b kw" style="width:41.65px"><i>table</i></span><span class="r op" style="width:7.29px"><i>(</i></span><span class="r nm" style="width:7.29px"><i>0</i></span><span class="r op" style="width:14.58px"><i>)=</i></span><span class="r" style="width:7.29px"> </span><span class="b kw" style="width:41.65px"><i>table</i></span><span class="r op" style="width:7.29px"><i>(</i></span><span class="r nm" style="width:7.29px"><i>0</i></span><span class="r op" style="width:21.87px"><i>)+(</i></span><span class="b kw" style="width:41.65px"><i>table</i></span><span class="r op" style="width:7.29px"><i>(</i></span><span class="r nm" style="width:7.29px"><i>0</i></span><span class="r op" style="width:7.29px"><i>)</i></span><span class="r" style="width:6.00px"> </span><span class="r op" style="width:7.29px"><i>-</i></span><span class="b kw" style="width:58.31px"><i>REG_POS</i></span><span class="r op" style="width:7.29px"><i>)</i></span><span class="r" style="width:20.90px"> </span><span class="r cm" style="width:58.32px"><i>'REG_POS</i></span><span class="c cm" style="width:72.85px">的锁存位置</span></div>
<div class="ln" style="top:325.28px"><span style="width:14.58px"><i>95</i></span></div>
<div class="cl" style="top:325.28px"><span class="r" style="width:87.48px"> </span><span class="b kw" style="width:33.32px"><i>WAIT</i></span><span class="r" style="width:7.29px"> </span><span class="b kw" style="width:33.32px"><i>IDLE</i></span></div>
<div class="ln" style="top:339.88px"><span style="width:14.58px"><i>96</i></span></div>
<div class="cl" style="top:339.88px"><span class="r" style="width:87.48px"> </span><span class="b kw" style="width:33.32px"><i>DPOS</i></span><span class="r" style="width:7.29px"> </span><span class="r op" style="width:7.29px"><i>=</i></span><span class="r" style="width:7.29px"> </span><span class="r nm" style="width:7.29px"><i>0</i></span></div>
<div class="ln" style="top:354.49px"><span style="width:14.58px"><i>97</i></span></div>
<div class="cl" style="top:354.49px"><span class="r" style="width:29.16px"> </span><span class="b bl" style="width:41.65px"><i>ENDIF</i></span></div>
<div class="ln" style="top:369.09px"><span style="width:14.58px"><i>98</i></span></div>
<div class="ln" style="top:383.69px"><span style="width:14.58px"><i>99</i></span></div>
<div class="cl" style="top:383.69px"><span class="r" style="width:29.16px"> </span><span class="b kw" style="width:49.98px"><i>REGIST</i></span><span class="r op" style="width:7.29px"><i>(</i></span><span class="r id" style="width:87.48px"><i>regist_imode</i></span><span class="r op" style="width:7.29px"><i>)</i></span><span class="r" style="width:80.19px"> </span><span class="r cm" style="width:7.29px"><i>'</i></span><span class="c cm" style="width:58.28px">锁存模式</span></div>
<div class="ln" style="top:398.30px"><span style="width:21.87px"><i>100</i></span></div>
<div class="ln" style="top:412.90px"><span style="width:21.87px"><i>101</i></span></div>
<div class="cl" style="top:412.90px"><span class="r" style="width:29.16px"> </span><span class="r cm" style="width:7.29px"><i>'</i></span><span class="c cm" style="width:145.70px">重新飞拍修正后的位置</span></div>
<div class="ln" style="top:427.51px"><span style="width:21.87px"><i>102</i></span></div>
<div class="cl" style="top:427.51px"><span class="r" style="width:29.16px"> </span><span class="b kw" style="width:91.63px"><i>HW_PSWITCH2</i></span><span class="r op" style="width:7.29px"><i>(</i></span><span class="r nm" style="width:7.29px"><i>1</i></span><span class="r op" style="width:7.29px"><i>,</i></span><span class="r nm" style="width:14.58px"><i> 0</i></span><span class="r op" style="width:7.29px"><i>,</i></span><span class="r nm" style="width:14.58px"><i> 1</i></span><span class="r op" style="width:7.29px"><i>,</i></span><span class="r nm" style="width:14.58px"><i> 0</i></span><span class="r op" style="width:7.29px"><i>,</i></span><span class="r nm" style="width:14.58px"><i> 0</i></span><span class="r op" style="width:7.29px"><i>,</i></span><span class="r nm" style="width:7.29px"><i>1</i></span><span class="r op" style="width:7.29px"><i>)</i></span></div>
<div class="ln" style="top:442.11px"><span style="width:21.87px"><i>103</i></span></div>
<div class="cl" style="top:442.11px"><span class="r" style="width:29.16px"> </span><span class="b kw" style="width:58.31px"><i>MOVEABS</i></span><span class="r op" style="width:7.29px"><i>(</i></span><span class="b kw" style="width:41.65px"><i>table</i></span><span class="r op" style="width:7.29px"><i>(</i></span><span class="r nm" style="width:7.29px"><i>0</i></span><span class="r op" style="width:14.58px"><i>)+</i></span><span class="r nm" style="width:14.58px"><i>50</i></span><span class="r op" style="width:7.29px"><i>)</i></span></div>
<div class="a" style="left:267px;top:167.44px;width:9.5px;height:9.5px;border:1px solid #b4b4b4;background:#fff"></div>
<div class="a" style="left:269.2px;top:171.54px;width:5px;height:1px;background:#9a9a9a"></div>
<div class="a" style="left:271.5px;top:176.94px;width:6px;height:26.21px;border-left:1px solid #c6c6c6;border-bottom:1px solid #c6c6c6;border-bottom-left-radius:5px"></div>
<div class="a" style="left:271.5px;top:222.35px;width:1px;height:240px;background:#c6c6c6"></div>
<div class="a" style="left:271.5px;top:341.18px;width:5px;height:6px;border-bottom:1px solid #c6c6c6;border-bottom-left-radius:4px"></div>
<div class="a" style="left:309px;top:252.26px;width:0;height:102.23px;border-left:1px dotted #555"></div>
<div class="a" style="left:338.5px;top:252.26px;width:0;height:102.23px;border-left:1px dotted #555"></div>
</div>
<div class="ttl" style="left:1310.5px;top:2px">轴参数</div>
<svg class="a" style="left:1690.6px;top:5px" width="56" height="16" viewBox="0 0 56 16"><path d="M6 6.8h8l-4 4.7z" fill="#6e6e6e"/><path d="M25.9 9.2V4.5h3.4" fill="none" stroke="#6e6e6e" stroke-width="1"/><path d="M29.3 4v5.3" stroke="#6e6e6e" stroke-width="1.7"/><path d="M24 9.4h6.7" stroke="#6e6e6e" stroke-width="1.2"/><path d="M27.5 9.6v2.7" stroke="#6e6e6e" stroke-width="1.1"/><path d="M41.3 5.2l6.6 6.6M47.9 5.2l-6.6 6.6" stroke="#6e6e6e" stroke-width="1.35" fill="none"/></svg>
<div class="a" style="left:1307px;top:30.6px;width:438px;height:429px;background:#f8f8f8"></div>
<div class="btn ui" style="left:1307.5px;top:32px;width:100px;height:21px;font-size:11px;line-height:22px;color:#333">轴选择</div>
<div class="btn ui" style="left:1417px;top:32px;width:99.5px;height:21px;font-size:11px;line-height:22px;color:#333">参数选择</div>
<div class="a" style="left:1307.5px;top:53.5px;width:419px;height:21px;background:linear-gradient(#fafafa,#efefef);border-top:1px solid #dedede;border-bottom:1px solid #d6d6d6"></div>
<div class="a" style="left:1347px;top:54.5px;width:1px;height:19px;background:#d3d3d3"></div>
<div class="lbl ui" style="left:1351.5px;top:57px;font-size:10.8px;color:#333;width:40px;overflow:hidden">轴0</div>
<div class="a" style="left:1420.2px;top:54.5px;width:1px;height:19px;background:#d3d3d3"></div>
<div class="lbl ui" style="left:1424.7px;top:57px;font-size:10.8px;color:#333;width:40px;overflow:hidden">轴1</div>
<div class="a" style="left:1493.2px;top:54.5px;width:1px;height:19px;background:#d3d3d3"></div>
<div class="lbl ui" style="left:1497.7px;top:57px;font-size:10.8px;color:#333;width:40px;overflow:hidden">轴2</div>
<div class="a" style="left:1566px;top:54.5px;width:1px;height:19px;background:#d3d3d3"></div>
<div class="lbl ui" style="left:1570.5px;top:57px;font-size:10.8px;color:#333;width:40px;overflow:hidden">轴3</div>
<div class="a" style="left:1639px;top:54.5px;width:1px;height:19px;background:#d3d3d3"></div>
<div class="lbl ui" style="left:1643.5px;top:57px;font-size:10.8px;color:#333;width:40px;overflow:hidden">轴4</div>
<div class="a" style="left:1711.6px;top:54.5px;width:1px;height:19px;background:#d3d3d3"></div>
<div class="lbl ui" style="left:1716.1px;top:57px;font-size:10.8px;color:#333;width:10px;overflow:hidden">轴5</div>
<div class="a" style="left:1307.5px;top:75px;width:423px;height:367px;background:#fff"></div>
<div class="lbl ui" style="left:1349.5px;top:78px;font-size:10.8px;color:#333">0</div>
<div class="lbl ui" style="left:1422.7px;top:78px;font-size:10.8px;color:#333">149.9800</div>
<div class="lbl ui" style="left:1495.7px;top:78px;font-size:10.8px;color:#333">0</div>
<div class="lbl ui" style="left:1568.5px;top:78px;font-size:10.8px;color:#333">0</div>
<div class="lbl ui" style="left:1641.5px;top:78px;font-size:10.8px;color:#333">0</div>
<div class="lbl ui" style="left:1714.1px;top:78px;font-size:10.8px;color:#333">0</div>
<div class="a" style="left:1697px;top:94.80px;width:33px;height:1px;background:#efefef"></div>
<div class="a" style="left:1697px;top:113.93px;width:33px;height:1px;background:#efefef"></div>
<div class="lbl ui" style="left:1714.5px;top:97.33px;font-size:10.8px;color:#333;width:15px;overflow:hidden">0</div>
<div class="a" style="left:1697px;top:133.06px;width:33px;height:1px;background:#efefef"></div>
<div class="lbl ui" style="left:1714.5px;top:116.46px;font-size:10.8px;color:#333;width:15px;overflow:hidden">200</div>
<div class="a" style="left:1697px;top:152.19px;width:33px;height:1px;background:#efefef"></div>
<div class="lbl ui" style="left:1714.5px;top:135.59px;font-size:10.8px;color:#333;width:15px;overflow:hidden">-20</div>
<div class="a" style="left:1697px;top:171.32px;width:33px;height:1px;background:#efefef"></div>
<div class="lbl ui" style="left:1714.5px;top:154.72px;font-size:10.8px;color:#333;width:15px;overflow:hidden">-1</div>
<div class="a" style="left:1697px;top:190.45px;width:33px;height:1px;background:#efefef"></div>
<div class="lbl ui" style="left:1714.5px;top:173.85px;font-size:10.8px;color:#333;width:15px;overflow:hidden">-1</div>
<div class="a" style="left:1697px;top:209.58px;width:33px;height:1px;background:#efefef"></div>
<div class="lbl ui" style="left:1714.5px;top:192.98px;font-size:10.8px;color:#333;width:15px;overflow:hidden">-1</div>
<div class="a" style="left:1697px;top:228.71px;width:33px;height:1px;background:#efefef"></div>
<div class="lbl ui" style="left:1714.5px;top:212.11px;font-size:10.8px;color:#333;width:15px;overflow:hidden">-1</div>
<div class="a" style="left:1697px;top:247.84px;width:33px;height:1px;background:#efefef"></div>
<div class="lbl ui" style="left:1714.5px;top:231.24px;font-size:10.8px;color:#333;width:15px;overflow:hidden">-1</div>
<div class="a" style="left:1697px;top:266.97px;width:33px;height:1px;background:#efefef"></div>
<div class="lbl ui" style="left:1714.5px;top:250.37px;font-size:10.8px;color:#333;width:15px;overflow:hidden">0</div>
<div class="a" style="left:1697px;top:286.10px;width:33px;height:1px;background:#efefef"></div>
<div class="lbl ui" style="left:1714.5px;top:269.50px;font-size:10.8px;color:#333;width:15px;overflow:hidden">0 (I</div>
<div class="a" style="left:1697px;top:305.23px;width:33px;height:1px;background:#efefef"></div>
<div class="lbl ui" style="left:1714.5px;top:288.63px;font-size:10.8px;color:#333;width:15px;overflow:hidden">0 (I</div>
<div class="a" style="left:1697px;top:324.36px;width:33px;height:1px;background:#efefef"></div>
<div class="lbl ui" style="left:1714.5px;top:307.76px;font-size:10.8px;color:#333;width:15px;overflow:hidden">0</div>
<div class="a" style="left:1697px;top:343.49px;width:33px;height:1px;background:#efefef"></div>
<div class="lbl ui" style="left:1714.5px;top:326.89px;font-size:10.8px;color:#333;width:15px;overflow:hidden">0</div>
<div class="a" style="left:1697px;top:362.62px;width:33px;height:1px;background:#efefef"></div>
<div class="lbl ui" style="left:1714.5px;top:346.02px;font-size:10.8px;color:#333;width:15px;overflow:hidden">0</div>
<div class="a" style="left:1697px;top:381.75px;width:33px;height:1px;background:#efefef"></div>
<div class="lbl ui" style="left:1714.5px;top:365.15px;font-size:10.8px;color:#333;width:15px;overflow:hidden">0h</div>
<div class="a" style="left:1697px;top:400.88px;width:33px;height:1px;background:#efefef"></div>
<div class="a" style="left:1697px;top:420.01px;width:33px;height:1px;background:#efefef"></div>
<div class="lbl ui" style="left:1714.5px;top:403.41px;font-size:10.8px;color:#333;width:15px;overflow:hidden">0</div>
<div class="a" style="left:1697px;top:439.14px;width:33px;height:1px;background:#efefef"></div>
<div class="lbl ui" style="left:1714.5px;top:422.54px;font-size:10.8px;color:#333;width:15px;overflow:hidden">-1</div>
<div class="a" style="left:1712.5px;top:75px;width:1px;height:367px;background:#efefef"></div>
<div class="a" style="left:1730px;top:53.5px;width:15px;height:389px;background:#f1f1f1"></div>
<svg class="a" style="left:1732.5px;top:58px" width="9" height="6" viewBox="0 0 9 6"><path d="M0.5 5.5h8L4.5 1z" fill="#6e6e6e"/></svg>
<svg class="a" style="left:1732.5px;top:433px" width="9" height="6" viewBox="0 0 9 6"><path d="M0.5 0.5h8L4.5 5z" fill="#6e6e6e"/></svg>
<div class="a" style="left:1733.6px;top:185px;width:7.8px;height:183px;background:#c4c4c4;border-radius:4px"></div>
<div class="a" style="left:1307.5px;top:442.5px;width:438px;height:16px;background:#f1f1f1"></div>
<svg class="a" style="left:1718.5px;top:446.5px" width="6" height="9" viewBox="0 0 6 9"><path d="M0.5 0.5v8L5 4.5z" fill="#5e5e5e"/></svg>
<div class="a" style="left:1307.5px;top:459.5px;width:438px;height:1px;background:#d9d9d9"></div>
<div class="a" style="left:0;top:485.5px;width:1745px;height:1px;background:#e2e2e2"></div>
<div class="ttl" style="left:-2px;top:491px">命令与输出</div>
<svg class="a" style="left:1690.9px;top:494.6px" width="56" height="16" viewBox="0 0 56 16"><path d="M6 6.8h8l-4 4.7z" fill="#6e6e6e"/><path d="M25.9 9.2V4.5h3.4" fill="none" stroke="#6e6e6e" stroke-width="1"/><path d="M29.3 4v5.3" stroke="#6e6e6e" stroke-width="1.7"/><path d="M24 9.4h6.7" stroke="#6e6e6e" stroke-width="1.2"/><path d="M27.5 9.6v2.7" stroke="#6e6e6e" stroke-width="1.1"/><path d="M41.3 5.2l6.6 6.6M47.9 5.2l-6.6 6.6" stroke="#6e6e6e" stroke-width="1.35" fill="none"/></svg>
<div class="a" style="left:0;top:521px;width:1745px;height:195px;background:#fdfdfd;border-top:1px solid #e0e0e0"></div>
<div class="cl" style="left:-2.6px;top:526.45px"><span class="r" style="width:532.17px;color:#222"><i>Down to Controller Ram Success, 2025-10-15 09:18:54, Elapsed time: 110ms.</i></span></div>
<div class="cl" style="left:-2.6px;top:544.00px"><span class="c" style="width:29.14px;color:#222">模式</span><span class="r" style="width:14.58px"> </span><span class="r" style="width:7.29px;color:#222"><i>4</i></span><span class="r" style="width:36.45px"> </span><span class="c" style="width:58.28px;color:#222">锁存位置</span><span class="r" style="width:7.29px"> </span><span class="r" style="width:51.03px;color:#222"><i>REG_POS</i></span><span class="r" style="width:14.58px"> </span><span class="r" style="width:65.61px;color:#222"><i>100.02000</i></span></div>
<div class="cl" style="left:-2.6px;top:562.00px"><span class="c" style="width:29.14px;color:#222">模式</span><span class="r" style="width:14.58px"> </span><span class="r" style="width:7.29px;color:#222"><i>4</i></span><span class="r" style="width:36.45px"> </span><span class="c" style="width:116.56px;color:#222">修正后的锁存位置</span><span class="r" style="width:7.29px"> </span><span class="r" style="width:51.03px;color:#222"><i>REG_POS</i></span><span class="r" style="width:43.74px"> </span><span class="r" style="width:21.87px;color:#222"><i>100</i></span></div>
<div class="a" style="left:212.6px;top:541.2px;width:75.2px;height:20px;border:3px solid #f45050;border-radius:3px"></div>
<div class="a" style="left:297.2px;top:560.2px;width:37.2px;height:17.8px;border:3px solid #f45050;border-radius:3px"></div>
<div class="a" style="left:0;top:716px;width:1745px;height:7px;background:#f7f7f7;border-top:1px solid #dcdcdc"></div>
<div class="a" style="left:64px;top:719.5px;width:1460px;height:10px;background:#fdfdfd;border:1px solid #d4d4d4;border-radius:4px"></div>
<div class="a" style="left:1535px;top:719.5px;width:62px;height:10px;background:#fdfdfd;border:1px solid #d4d4d4;border-radius:4px"></div>
<div class="a" style="left:1607px;top:719.5px;width:62px;height:10px;background:#fdfdfd;border:1px solid #d4d4d4;border-radius:4px"></div>
<div class="a" style="left:1680px;top:719.5px;width:61px;height:10px;background:#fdfdfd;border:1px solid #d4d4d4;border-radius:4px"></div>
<div class="a" id="dlg" style="left:760.9px;top:89.8px;width:936.45px;height:607.95px;background:#f0f0f0;border-radius:4.4px;box-shadow:0 6px 12px rgba(0,0,0,.15),0 1px 4px rgba(0,0,0,.06);overflow:hidden">
<div class="a" style="left:5.10px;top:8.20px;font-size:19px;line-height:24px;color:#2a74d8;white-space:nowrap;font-weight:300">示波器</div>
<svg class="a" style="left:921.60px;top:15.70px" width="7" height="7" viewBox="0 0 7 7"><path d="M.7.7l5.6 5.6M6.3.7L.7 6.3" stroke="#555" stroke-width="1.1"/></svg>
<div class="lbl song" style="left:11.80px;top:38.80px;font-size:10.9px;color:#222">通道</div>
<div class="lbl song" style="left:47.10px;top:38.80px;font-size:10.9px;color:#222">配置</div>
<div class="lbl song" style="left:83.10px;top:38.80px;font-size:10.9px;color:#222">辅助功能</div>
<div class="lbl song" style="left:140.10px;top:38.80px;font-size:10.9px;color:#222">帮助</div>
<div class="a" style="left:4.10px;top:55.80px;width:308px;height:549px;background:#f8f8f8"></div>
<div class="a" style="left:12.10px;top:59.60px;width:34.6px;height:32.6px;background:#e7e7e7;border:1px solid #dcdcdc;border-radius:3.5px"></div>
<svg class="a" style="left:14.50px;top:61.10px" width="30" height="30" viewBox="0 0 30 30"><circle cx="15" cy="15" r="12.9" fill="none" stroke="#3a68ff" stroke-width="1.7"/><path d="M11.6 9.4v11.3L22.6 15z" fill="#7fa2ff"/></svg>
<div class="combo song" style="left:53.50px;top:67.40px;width:88.8px">自动触发</div>
<div class="btn song" style="left:175.30px;top:62.30px;width:98.6px;height:23.6px;font-size:11px;line-height:25.5px;color:#a6a6a6">手动触发</div>
<div class="btn ui" style="left:280.30px;top:62.30px;width:24.5px;height:23.6px;font-size:12.5px;line-height:20px;color:#5a5a5a;letter-spacing:-.6px">&lt;&lt;</div>
<div class="lbl song" style="left:12.10px;top:103.40px">水平刻度:</div>
<div class="combo song" style="left:67.60px;top:100.20px;width:74.7px"><span class="l">0.1s</span></div>
<div class="lbl song" style="left:175.10px;top:103.40px">显示模式:</div>
<div class="combo song" style="left:230.30px;top:100.20px;width:75px"><span class="ui" style="font-size:10px;color:#555;font-weight:400;margin-right:3.5px">YT</span>模式</div>
<div class="lbl song" style="left:12.10px;top:128.80px">通道数:</div>
<div class="combo song" style="left:67.60px;top:125.60px;width:74.7px"><span class="l">3</span></div>
<div class="lbl song" style="left:175.10px;top:128.80px"><span class="l">3D</span>视角:</div>
<div class="combo song" style="left:230.30px;top:125.60px;width:75px;color:#888;background:#f4f4f4">俯视图<div class="a" style="right:0;top:0;width:14.5px;height:18.5px;background:#e9e9e9;border-radius:0 3px 3px 0"></div></div>
<div class="lbl song" style="left:12.10px;top:154.00px">常规通道:</div>
<div class="combo song" style="left:67.60px;top:150.80px;width:74.7px">实线</div>
<div class="lbl song" style="left:175.10px;top:154.00px">对比通道:</div>
<div class="combo song" style="left:230.30px;top:150.80px;width:75px">实线</div>
<div class="cb" style="left:13.10px;top:181.20px"><svg class="a" style="left:.5px;top:.5px" width="8" height="8" viewBox="0 0 8 8"><path d="M1.3 4.2l2 2L6.8 1.8" fill="none" stroke="#666" stroke-width="1.1"/></svg></div><div class="lbl song" style="left:25.60px;top:180.20px;color:#333">连续采集</div>
<div class="cb" style="left:117.10px;top:181.20px"><svg class="a" style="left:.5px;top:.5px" width="8" height="8" viewBox="0 0 8 8"><path d="M1.3 4.2l2 2L6.8 1.8" fill="none" stroke="#666" stroke-width="1.1"/></svg></div><div class="lbl song" style="left:129.60px;top:180.20px;color:#333">跟随</div>
<div class="cb" style="left:207.80px;top:181.20px"></div><div class="lbl song" style="left:220.30px;top:180.20px;color:#333">放大镜</div>
<div class="a" style="left:12.60px;top:200.80px;width:295px;height:22px;background:#ececec"></div>
<div class="a" style="left:12.10px;top:222.20px;width:296px;height:381.8px;background:#f9f9f9;border:1px solid #a2a2a2"></div>
<div class="a" style="left:57.10px;top:202.40px;width:33.5px;height:21px;background:#f9f9f9;border:1px solid #cfcfcf;border-bottom:0"></div>
<div class="lbl song" style="left:17.60px;top:206.20px;font-size:10.9px">通道号</div>
<div class="lbl song" style="left:62.70px;top:206.20px;font-size:10.9px">游标</div>
<div class="lbl song" style="left:96.10px;top:206.20px;font-size:10.9px">统计</div>
<div class="cb" style="left:23.10px;top:238.20px"></div><div class="lbl song" style="left:35.60px;top:237.20px;color:#333">显示<span class="l">X</span></div>
<div class="cb" style="left:88.80px;top:238.20px"><svg class="a" style="left:.5px;top:.5px" width="8" height="8" viewBox="0 0 8 8"><path d="M1.3 4.2l2 2L6.8 1.8" fill="none" stroke="#666" stroke-width="1.1"/></svg></div><div class="lbl song" style="left:101.30px;top:237.20px;color:#333">显示<span class="l">Y</span></div>
<div class="cb" style="left:154.60px;top:238.20px"></div><div class="lbl song" style="left:167.10px;top:237.20px;color:#a9a9a9">附着</div>
<div class="btn song" style="left:218.90px;top:231.30px;width:76.2px;height:23.5px;font-size:11px;line-height:25px;color:#222">默认</div>
<div class="a" style="left:15.10px;top:262.70px;width:290px;height:338.6px;background:#fdfdfd;border:1px solid #c4c4c4"></div>
<div class="a" style="left:16.10px;top:263.70px;width:286px;height:18px;background:linear-gradient(#f6f6f6,#e9e9e9);border-bottom:1px solid #bdbdbd"></div>
<div class="a" style="left:36.30px;top:264.20px;width:1px;height:73px;background:#d4d4d4"></div>
<div class="a" style="left:101.60px;top:264.20px;width:1px;height:73px;background:#d4d4d4"></div>
<div class="a" style="left:158.40px;top:264.20px;width:1px;height:73px;background:#d4d4d4"></div>
<div class="a" style="left:214.60px;top:264.20px;width:1px;height:73px;background:#d4d4d4"></div>
<div class="a" style="left:301.90px;top:264.20px;width:1px;height:73px;background:#d4d4d4"></div>
<div class="lbl song" style="left:40.10px;top:266.50px;font-size:10.9px;letter-spacing:0px">通道号</div>
<div class="lbl song" style="left:105.40px;top:266.50px;font-size:10.9px;letter-spacing:-1.1px">X1(Y1)</div>
<div class="lbl song" style="left:162.20px;top:266.50px;font-size:10.9px;letter-spacing:-1.1px">X2(Y2)</div>
<div class="lbl song" style="left:218.40px;top:266.50px;font-size:10.9px;letter-spacing:-1.1px">X2-X1(Y2-Y1)</div>
<div class="a" style="left:16.10px;top:282.70px;width:286px;height:18.4px;background:#fff;border-bottom:1px solid #d9d9d9"></div>
<div class="a" style="left:17.50px;top:283.10px;width:18.6px;height:17.4px;background:#ff0000"></div>
<div class="lbl song" style="left:39.10px;top:284.70px;font-size:10.9px;letter-spacing:-1.1px">DPOS(1)(Y)</div>
<div class="lbl song" style="left:104.40px;top:284.70px;font-size:10.9px;letter-spacing:-1.1px">-59.2</div>
<div class="lbl song" style="left:161.20px;top:284.70px;font-size:10.9px;letter-spacing:-1.1px">120.8</div>
<div class="lbl song" style="left:217.40px;top:284.70px;font-size:10.9px;letter-spacing:-1.1px">180</div>
<div class="a" style="left:16.10px;top:301.15px;width:286px;height:18.4px;background:#f3f3f3;border-bottom:1px solid #d9d9d9"></div>
<div class="a" style="left:17.50px;top:301.55px;width:18.6px;height:17.4px;background:#ffff00"></div>
<div class="lbl song" style="left:39.10px;top:303.15px;font-size:10.9px;letter-spacing:-1.1px">OUT(0)(Y)</div>
<div class="lbl song" style="left:104.40px;top:303.15px;font-size:10.9px;letter-spacing:-1.1px">-0.444</div>
<div class="lbl song" style="left:161.20px;top:303.15px;font-size:10.9px;letter-spacing:-1.1px">0.906</div>
<div class="lbl song" style="left:217.40px;top:303.15px;font-size:10.9px;letter-spacing:-1.1px">1.35</div>
<div class="a" style="left:16.10px;top:319.60px;width:286px;height:18.4px;background:#fff;border-bottom:1px solid #d9d9d9"></div>
<div class="a" style="left:17.50px;top:320.00px;width:18.6px;height:17.4px;background:#00ff00"></div>
<div class="lbl song" style="left:39.10px;top:321.60px;font-size:10.9px;letter-spacing:-1.1px">MPOS(1)(Y)</div>
<div class="lbl song" style="left:104.40px;top:321.60px;font-size:10.9px;letter-spacing:-1.1px">-59.2</div>
<div class="lbl song" style="left:161.20px;top:321.60px;font-size:10.9px;letter-spacing:-1.1px">120.8</div>
<div class="lbl song" style="left:217.40px;top:321.60px;font-size:10.9px;letter-spacing:-1.1px">180</div>
<div class="a" style="left:36.30px;top:282.20px;width:1px;height:55.5px;background:#d4d4d4"></div>
<div class="a" style="left:101.60px;top:282.20px;width:1px;height:55.5px;background:#d4d4d4"></div>
<div class="a" style="left:158.40px;top:282.20px;width:1px;height:55.5px;background:#d4d4d4"></div>
<div class="a" style="left:214.60px;top:282.20px;width:1px;height:55.5px;background:#d4d4d4"></div>
<div class="a" style="left:301.90px;top:282.20px;width:1px;height:55.5px;background:#d4d4d4"></div>
<div class="a" style="left:312.10px;top:55.80px;width:4px;height:549px;background:linear-gradient(90deg,#c4c4c4,#d8d8d8 60%,#f2f2f2)"></div>
<div class="a" style="left:316.10px;top:55.80px;width:617px;height:548px;background:#fcfcfc"></div>
<div class="a" style="left:316.10px;top:55.80px;width:617px;height:15.6px;background:#f1f1f1"></div>
<svg class="a" style="left:321.10px;top:57.70px" width="6" height="9" viewBox="0 0 6 9"><path d="M5.5 0.5v8L1 4.5z" fill="#5e5e5e"/></svg>
<svg class="a" style="left:922.60px;top:57.70px" width="6" height="9" viewBox="0 0 6 9"><path d="M0.5 0.5v8L5 4.5z" fill="#5e5e5e"/></svg>
<div class="a" style="left:567.80px;top:57.60px;width:15px;height:8px;background:#c6c6c6;border-radius:4px"></div>
<div class="a" style="left:316.10px;top:71.20px;width:616.5px;height:532px;border:1px solid #8f8f8f;border-right-color:#6a6a6a;border-bottom-color:#5a5a5a;background:#fdfdfd"></div>
<svg class="a" style="left:318.30px;top:71.40px" width="611.8" height="493.5" viewBox="1079.2 161.2 611.8 493.5"><rect x="1079.2" y="161.2" width="611.8" height="493.5" fill="#001040"/><path d="M1125.0 161.2V654.7" stroke="#4d4c20" stroke-width="1.3"/><path d="M1216.2 161.2V654.7" stroke="#4d4c20" stroke-width="1.3"/><path d="M1307.4 161.2V654.7" stroke="#4d4c20" stroke-width="1.3"/><path d="M1398.6 161.2V654.7" stroke="#4d4c20" stroke-width="1.3"/><path d="M1489.8 161.2V654.7" stroke="#4d4c20" stroke-width="1.3"/><path d="M1581.0 161.2V654.7" stroke="#4d4c20" stroke-width="1.3"/><path d="M1672.2 161.2V654.7" stroke="#4d4c20" stroke-width="1.3"/><path d="M1079.2 225.6H1691" stroke="#4d4c20" stroke-width="1.3"/><path d="M1079.2 316.6H1691" stroke="#4d4c20" stroke-width="1.3"/><path d="M1079.2 498.7H1691" stroke="#4d4c20" stroke-width="1.3"/><path d="M1079.2 589.7H1691" stroke="#4d4c20" stroke-width="1.3"/><path d="M1079.2 407.6H1691" stroke="#6f6c08" stroke-width="1.5"/><path d="M1079.2 269.8H1691M1079.2 474.9H1691" stroke="#bfc1cc" stroke-width="1.5"/><path d="M1079.2 236.9 L1166.3 236.9 L1166.3 407.3 L1167.5 407.3 L1169.2 407.0 L1170.9 406.2 L1172.6 404.9 L1174.3 403.0 L1176.0 400.5 L1177.7 397.6 L1179.3 394.1 L1181.0 390.0 L1182.7 385.4 L1184.4 380.3 L1186.1 374.6 L1187.8 368.8 L1189.5 362.9 L1191.2 357.1 L1192.9 351.3 L1194.6 345.4 L1196.3 339.6 L1198.0 333.8 L1199.7 327.9 L1201.3 322.1 L1203.0 316.3 L1204.7 310.4 L1206.4 304.6 L1208.1 298.8 L1209.8 292.9 L1211.5 287.1 L1213.2 281.3 L1214.9 275.4 L1216.6 269.6 L1218.3 263.9 L1220.0 258.8 L1221.7 254.2 L1223.4 250.1 L1225.0 246.6 L1226.7 243.7 L1228.4 241.2 L1230.1 239.3 L1231.8 238.0 L1233.5 237.2 L1235.2 236.9 L1235.6 407.3 L1237.0 407.3 L1238.7 407.0 L1240.4 406.2 L1242.1 404.9 L1243.8 403.0 L1245.6 400.5 L1247.3 397.6 L1249.0 394.1 L1250.7 390.0 L1252.4 385.4 L1254.1 380.3 L1255.8 374.6 L1257.5 368.8 L1259.3 362.9 L1261.0 357.1 L1262.7 351.3 L1264.4 345.4 L1266.1 339.6 L1267.8 333.8 L1269.5 327.9 L1271.2 322.1 L1273.0 316.3 L1274.7 310.4 L1276.4 304.6 L1278.1 298.8 L1279.8 292.9 L1281.5 287.1 L1283.2 281.3 L1285.0 275.4 L1286.7 269.6 L1288.4 263.9 L1290.1 258.8 L1291.8 254.2 L1293.5 250.1 L1295.2 246.6 L1296.9 243.7 L1298.7 241.2 L1300.4 239.3 L1302.1 238.0 L1303.8 237.2 L1305.5 236.9 L1691.0 236.9" fill="none" stroke="#ff1010" stroke-width="1.9" stroke-linejoin="round"/><path d="M1079.2 255.6 L1166.8 255.6 L1166.8 407.4 L1208.9 407.4 L1208.9 255.6 L1208.9 407.4 L1278.8 407.4 L1278.8 255.6 L1691.0 255.6" fill="none" stroke="#ffff10" stroke-width="1.9" stroke-linejoin="miter"/></svg>
<div class="a pt" style="left:319.10px;top:73.60px;color:#f01010;line-height:14px">1 DPOS(1)</div>
<div class="a pt" style="left:319.10px;top:86.00px;color:#ffff20;line-height:14px">2 OUT(0)</div>
<div class="a pt" style="left:319.10px;top:98.30px;color:#10e820;line-height:14px">3 MPOS(1)</div>
<div class="a pt" style="left:476.40px;top:73.60px;color:#f01010;line-height:14px">Min:0.00  Max:149.99  Scale:80</div>
<div class="a pt" style="left:476.40px;top:86.00px;color:#ffff20;line-height:14px">Min:0.00  Max:1.00  Scale:0.6</div>
<div class="a pt" style="left:476.40px;top:98.30px;color:#10e820;line-height:14px">Min:-0.03  Max:149.98  Scale:80</div>
<div class="a pt" style="left:917.10px;top:182.60px;color:#f0f0f0;line-height:14px">Y2</div>
<div class="a pt" style="left:904.90px;top:386.70px;color:#f0f0f0;line-height:14px">Y1</div>
<div class="a" style="left:318.30px;top:564.90px;width:611.8px;height:1px;background:#9a9a9a"></div>
<div class="a" style="left:363.50px;top:564.90px;width:1.2px;height:4px;background:#777"></div>
<div class="a pt" style="left:351.90px;top:572.80px;color:#555;line-height:14px">13.3</div>
<div class="a" style="left:454.70px;top:564.90px;width:1.2px;height:4px;background:#777"></div>
<div class="a pt" style="left:443.10px;top:572.80px;color:#555;line-height:14px">13.4</div>
<div class="a" style="left:545.90px;top:564.90px;width:1.2px;height:4px;background:#777"></div>
<div class="a pt" style="left:534.30px;top:572.80px;color:#555;line-height:14px">13.5</div>
<div class="a" style="left:637.10px;top:564.90px;width:1.2px;height:4px;background:#777"></div>
<div class="a pt" style="left:625.50px;top:572.80px;color:#555;line-height:14px">13.6</div>
<div class="a" style="left:728.30px;top:564.90px;width:1.2px;height:4px;background:#777"></div>
<div class="a pt" style="left:716.70px;top:572.80px;color:#555;line-height:14px">13.7</div>
<div class="a" style="left:819.50px;top:564.90px;width:1.2px;height:4px;background:#777"></div>
<div class="a pt" style="left:807.90px;top:572.80px;color:#555;line-height:14px">13.8</div>
<div class="a" style="left:910.70px;top:564.90px;width:1.2px;height:4px;background:#777"></div>
<div class="a pt" style="left:899.10px;top:572.80px;color:#555;line-height:14px">13.9</div>
<div class="a" style="left:603.10px;top:587.20px;color:#444;line-height:14px;font-size:12.2px;white-space:pre;font-family:'Noto Serif CJK SC',serif;font-weight:500;letter-spacing:.6px">时间</div>
<div class="a pt" style="left:629.30px;top:587.50px;color:#444;line-height:14px">(s)</div>
<svg class="a" style="left:0;top:0" width="936.45" height="607.95" viewBox="0 0 936.45 607.95"><rect x=".75" y=".75" width="934.95" height="606.45" rx="3.6" fill="none" stroke="#3f82d8" stroke-width="1.5"/></svg>
</div>
</body></html>
